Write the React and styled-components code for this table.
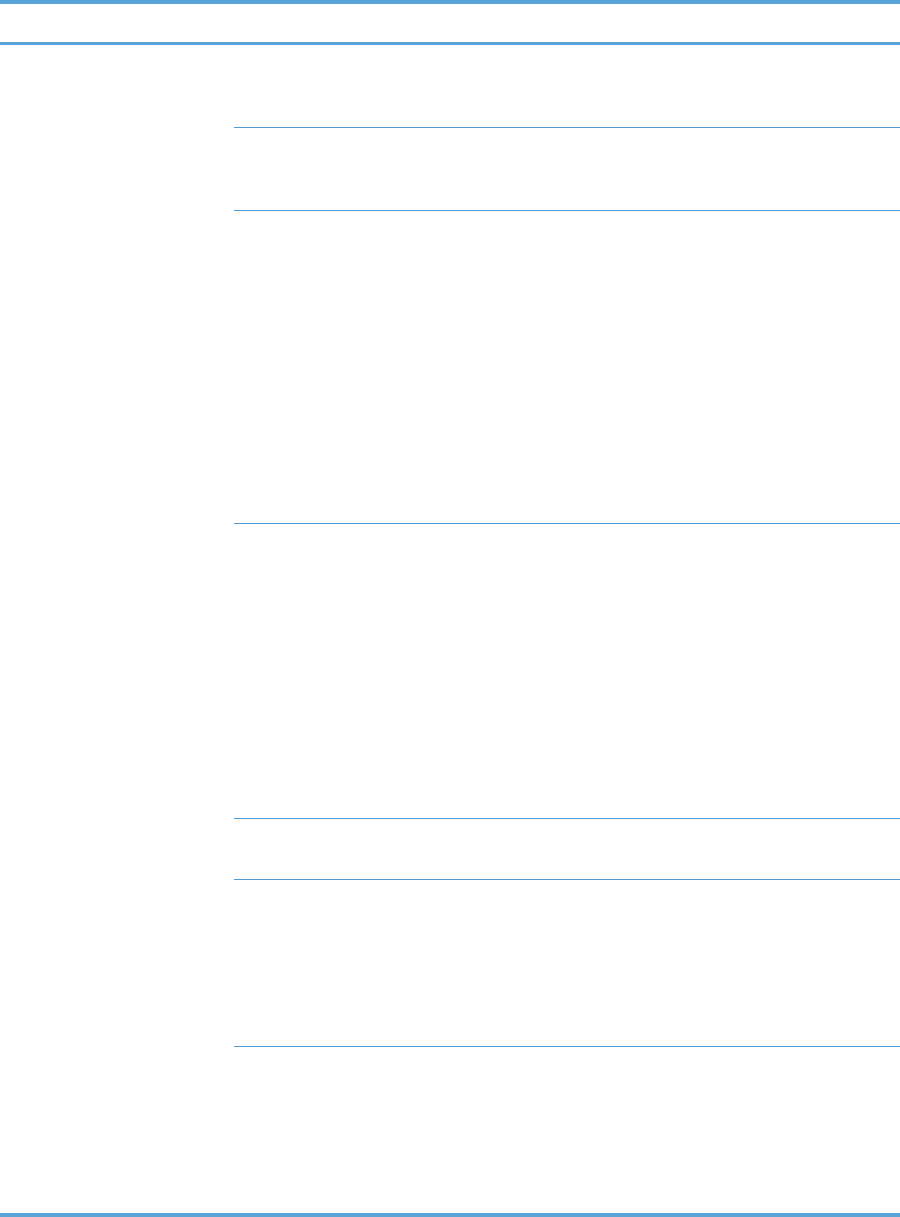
import styled, { createGlobalStyle } from "styled-components";

const GlobalStyle = createGlobalStyle`
  body {
    margin: 0;
    background: #ffffff;
    font-family: "Liberation Sans", Arial, sans-serif;
  }
`;

const rows = [82, 82, 312, 294, 60, 166, 166];

const App = () => {
  return (
    <>
      <GlobalStyle />
      <Table>
        <HeaderRow>
          <HeaderCell />
          <HeaderCell />
        </HeaderRow>

        {rows.map((h, i) => (
          <Row key={i}>
            <LabelCell $h={h} />
            <ValueCell $h={h} $last={i === rows.length - 1} />
          </Row>
        ))}
      </Table>
    </>
  );
};

const Table = styled.div`
  width: 900px;
  border-top: 4px solid #5aa3d6;
  border-bottom: 4px solid #5aa3d6;
  box-sizing: border-box;
`;

const HeaderRow = styled.div`
  display: grid;
  grid-template-columns: 234px 1fr;
  height: 38px;
  border-bottom: 3px solid #5aa3d6;
`;

const HeaderCell = styled.div`
  font-size: 14px;
  font-weight: 700;
  color: #222;
`;

const Row = styled.div`
  display: grid;
  grid-template-columns: 234px 1fr;
`;

const LabelCell = styled.div`
  height: ${(p) => p.$h}px;
`;

const ValueCell = styled.div`
  height: ${(p) => p.$h}px;
  border-bottom: ${(p) => (p.$last ? "none" : "1px solid #4c9bd7")};
`;

export default App;
